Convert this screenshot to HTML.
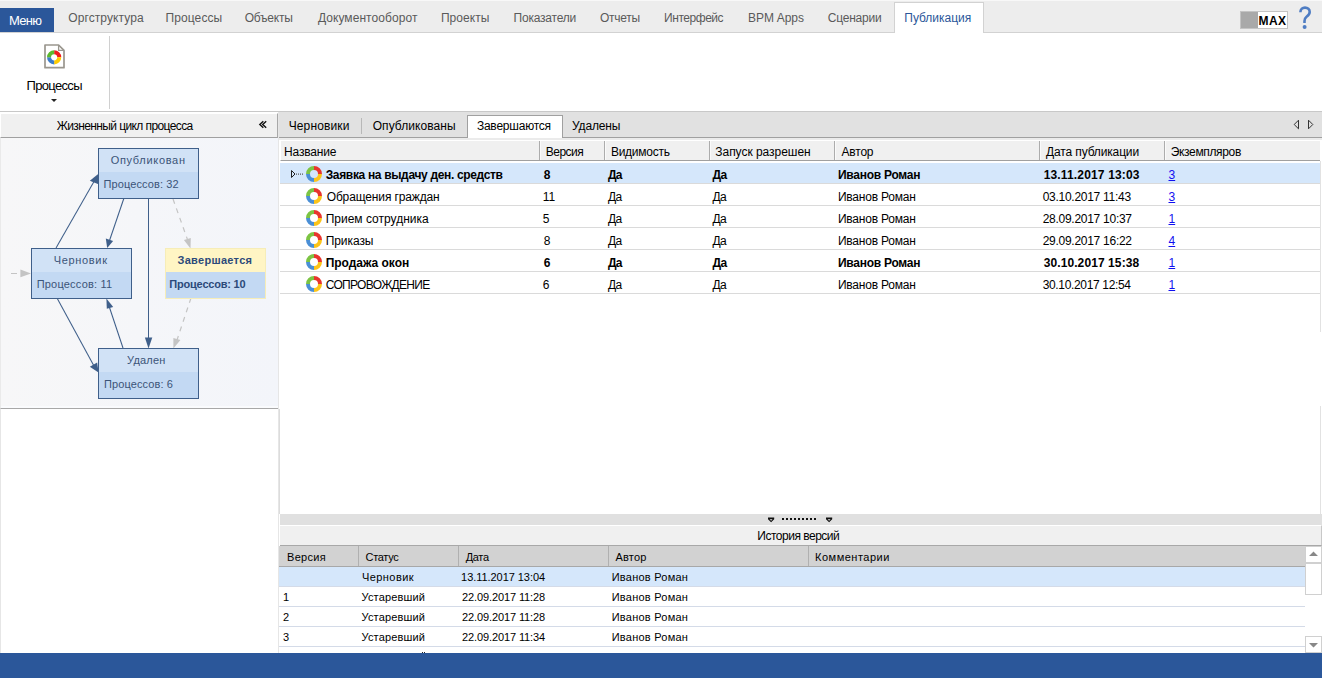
<!DOCTYPE html>
<html><head><meta charset="utf-8">
<style>
*{margin:0;padding:0;box-sizing:border-box}
html,body{width:1322px;height:678px;overflow:hidden;background:#fff;font-family:"Liberation Sans",sans-serif;font-size:12px;color:#000}
.a{position:absolute}
.t{position:absolute;white-space:nowrap;line-height:14px}
.bx{position:absolute;width:101px;height:51px;border:1px solid #3f5f8a;background:#c3d9f3}
.bx .hd{position:absolute;left:0;top:0;width:99px;height:23px;background:#d1e2f6}
</style></head><body>

<div class="a" style="left:0;top:0;width:1322px;height:33px;background:#ededed;border-top:1px solid #f8f8f8;border-bottom:1px solid #d2d2d2"></div>
<div class="a" style="left:0;top:8px;width:54px;height:24px;background:#2b579a"></div>
<div class="a" style="left:894px;top:2px;width:90px;height:31px;background:#fff;border:1px solid #d2d2d2;border-bottom:none"></div>
<div class="a" style="left:1240px;top:11px;width:48px;height:18px;background:#fff;border:1px solid #c4c4c4"></div>
<div class="a" style="left:1241px;top:12px;width:17px;height:16px;background:#a9a9a9"></div>
<svg class="a" style="left:1298px;top:6px" width="16" height="24" viewBox="0 0 16 24"><path d="M2.4 6.2C2.4 3.2 4.6 1.6 7 1.6C9.6 1.6 11.7 3.4 11.7 6C11.7 8.6 9.9 9.8 8.3 11C6.9 12.1 6.5 13 6.5 15V17" fill="none" stroke="#4f7dc3" stroke-width="2.6"/><circle cx="6.6" cy="21" r="2" fill="#4f7dc3"/></svg>
<div class="a" style="left:109px;top:36px;width:1px;height:73px;background:#d0d0d0"></div>
<div class="a" style="left:0;top:111px;width:1322px;height:1px;background:#c8c8c8"></div>
<svg class="a" style="left:40px;top:40px" width="30" height="32" viewBox="0 0 30 32"><path d="M5 5 H18.6 L24 10.4 V27.7 H5 Z" fill="#fff" stroke="#9a968e" stroke-width="1.7" stroke-linejoin="round"/><path d="M18.6 5 V10.4 H24" fill="none" stroke="#9a968e" stroke-width="1.3"/><path d="M14.15 12.20A5.1 5.1 0 0 1 19.25 17.30" stroke="#ee1c1c" stroke-width="3.9999999999999996" fill="none"/><path d="M19.25 17.30A5.1 5.1 0 0 1 14.15 22.40" stroke="#ffcc00" stroke-width="3.9999999999999996" fill="none"/><path d="M14.15 22.40A5.1 5.1 0 0 1 9.05 17.30" stroke="#3d7cc9" stroke-width="3.9999999999999996" fill="none"/><path d="M9.05 17.30A5.1 5.1 0 0 1 14.15 12.20" stroke="#5cb82e" stroke-width="3.9999999999999996" fill="none"/></svg>
<svg class="a" style="left:50.5px;top:99px" width="7" height="4"><path d="M0 0H6L3 3Z" fill="#222"/></svg>
<div class="a" style="left:0;top:113px;width:278px;height:25px;background:#f0f0f0;border-left:1px solid #fff;border-top:1px solid #fff;border-bottom:1px solid #a0a0a0;border-right:1px solid #a8a8a8"></div>
<svg class="a" style="left:257px;top:119px" width="12" height="11"><path d="M6.3 2.2 L2.8 5.5 L6.3 8.8 M9.2 2.2 L5.7 5.5 L9.2 8.8" fill="none" stroke="#111" stroke-width="1.4"/></svg>
<div class="a" style="left:0;top:138px;width:278px;height:271px;background:linear-gradient(90deg,#f7f7f8,#f3f5fa);border-bottom:1px solid #a8a8a8;border-left:1px solid #eaeaea"></div><div class="a" style="left:0;top:409px;width:1px;height:244px;background:#e6e6e6"></div><div class="a" style="left:1px;top:406px;width:277px;height:2px;background:#fafbfd"></div>
<div class="a" style="left:278px;top:112px;width:1px;height:541px;background:#e6e6e6"></div><div class="a" style="left:279px;top:409px;width:1px;height:105px;background:#dcdcdc"></div>
<svg class="a" style="left:0;top:138px" width="278" height="270" viewBox="0 138 278 270">
<g stroke="#3f5f8a" stroke-width="1.05" fill="none">
<line x1="56" y1="248" x2="96" y2="178"/>
<line x1="124" y1="198" x2="109" y2="242"/>
<line x1="148.5" y1="198" x2="148.5" y2="340"/>
<line x1="57" y1="298" x2="94" y2="366"/>
<line x1="123" y1="348" x2="109" y2="306"/>
</g>
<g fill="#3f5f8a">
<path d="M98.5 173.8 L98.5 184.2 L89.8 180.8 Z"/>
<path d="M107.2 248 L105.8 238.4 L113.1 240.9 Z"/>
<path d="M148.5 348.5 L144.9 337.5 L152.3 337.5 Z"/>
<path d="M98.5 372.5 L89.8 366.8 L97.2 362.5 Z"/>
<path d="M106.4 298.5 L106.8 308.8 L113.2 307 Z"/>
</g>
<g stroke="#c4c4c4" stroke-width="1.2" fill="none" stroke-dasharray="5 5">
<line x1="173" y1="199" x2="188" y2="241"/>
<line x1="191" y1="298" x2="177" y2="340"/>
<line x1="11" y1="273.5" x2="17" y2="273.5" stroke-dasharray="none" stroke-width="1"/>
</g>
<g fill="#c4c4c4">
<path d="M190.5 248.5 L183.9 240 L190.8 238 Z"/>
<path d="M173.4 348.6 L173.4 338 L180.4 340 Z"/>
<path d="M31 273.4 L20.4 269.6 L20.4 277.2 Z"/>
</g>
</svg>
<div class="bx" style="left:98px;top:148px"><div class="hd"></div></div>
<div class="bx" style="left:31px;top:248px"><div class="hd"></div></div>
<div class="bx" style="left:98px;top:348px"><div class="hd"></div></div>
<div class="bx" style="left:165px;top:248px;border-color:#f6edb8"><div class="hd" style="background:#fff5c4"></div></div>
<div class="a" style="left:279px;top:112px;width:1043px;height:26px;background:#e1e1e1;border-bottom:1px solid #a0a0a0"></div>
<div class="a" style="left:361px;top:118px;width:1px;height:16px;background:#b8b8b8"></div>
<div class="a" style="left:467px;top:115px;width:96px;height:23px;background:#fff;border:1px solid #a0a0a0;border-bottom:none"></div>
<svg class="a" style="left:1290px;top:118px" width="28" height="12"><path d="M8.5 2.2 L4.2 6.5 L8.5 10.8 Z M18.5 2.2 L22.8 6.5 L18.5 10.8 Z" fill="none" stroke="#333" stroke-width="1"/></svg>
<div class="a" style="left:280px;top:138px;width:1042px;height:376px;background:#fff"></div><div class="a" style="left:279px;top:138px;width:1043px;height:2px;background:#ebebeb"></div>
<div class="a" style="left:280px;top:140px;width:1040px;height:21px;background:#f0f0f0;border-top:1px solid #fff;border-left:1px solid #fff;border-bottom:1px solid #a0a0a0"></div>
<div class="a" style="left:539px;top:141px;width:1px;height:19px;background:#acacac"></div><div class="a" style="left:540px;top:141px;width:1px;height:19px;background:#fafafa"></div>
<div class="a" style="left:604px;top:141px;width:1px;height:19px;background:#acacac"></div><div class="a" style="left:605px;top:141px;width:1px;height:19px;background:#fafafa"></div>
<div class="a" style="left:709px;top:141px;width:1px;height:19px;background:#acacac"></div><div class="a" style="left:710px;top:141px;width:1px;height:19px;background:#fafafa"></div>
<div class="a" style="left:834px;top:141px;width:1px;height:19px;background:#acacac"></div><div class="a" style="left:835px;top:141px;width:1px;height:19px;background:#fafafa"></div>
<div class="a" style="left:1039px;top:141px;width:1px;height:19px;background:#acacac"></div><div class="a" style="left:1040px;top:141px;width:1px;height:19px;background:#fafafa"></div>
<div class="a" style="left:1164px;top:141px;width:1px;height:19px;background:#acacac"></div><div class="a" style="left:1165px;top:141px;width:1px;height:19px;background:#fafafa"></div>
<div class="a" style="left:280px;top:162px;width:1040px;height:22px;background:#fff;border-bottom:1px solid #dadada"></div>
<div class="a" style="left:280px;top:163px;width:1040px;height:20px;background:#d5e7fb"></div>
<svg class="a" style="left:304px;top:164px" width="20" height="20"><path d="M10.00 4.00A6.0 6.0 0 0 1 16.00 10.00" stroke="#e8362e" stroke-width="4" fill="none"/><path d="M16.00 10.00A6.0 6.0 0 0 1 10.00 16.00" stroke="#fcc419" stroke-width="4" fill="none"/><path d="M10.00 16.00A6.0 6.0 0 0 1 4.00 10.00" stroke="#4a8fd6" stroke-width="4" fill="none"/><path d="M4.00 10.00A6.0 6.0 0 0 1 10.00 4.00" stroke="#7cc443" stroke-width="4" fill="none"/></svg>
<div class="a" style="left:280px;top:184px;width:1040px;height:22px;background:#fff;border-bottom:1px solid #dadada"></div>
<svg class="a" style="left:304px;top:186px" width="20" height="20"><path d="M10.00 4.00A6.0 6.0 0 0 1 16.00 10.00" stroke="#e8362e" stroke-width="4" fill="none"/><path d="M16.00 10.00A6.0 6.0 0 0 1 10.00 16.00" stroke="#fcc419" stroke-width="4" fill="none"/><path d="M10.00 16.00A6.0 6.0 0 0 1 4.00 10.00" stroke="#4a8fd6" stroke-width="4" fill="none"/><path d="M4.00 10.00A6.0 6.0 0 0 1 10.00 4.00" stroke="#7cc443" stroke-width="4" fill="none"/></svg>
<div class="a" style="left:280px;top:206px;width:1040px;height:22px;background:#fff;border-bottom:1px solid #dadada"></div>
<svg class="a" style="left:304px;top:208px" width="20" height="20"><path d="M10.00 4.00A6.0 6.0 0 0 1 16.00 10.00" stroke="#e8362e" stroke-width="4" fill="none"/><path d="M16.00 10.00A6.0 6.0 0 0 1 10.00 16.00" stroke="#fcc419" stroke-width="4" fill="none"/><path d="M10.00 16.00A6.0 6.0 0 0 1 4.00 10.00" stroke="#4a8fd6" stroke-width="4" fill="none"/><path d="M4.00 10.00A6.0 6.0 0 0 1 10.00 4.00" stroke="#7cc443" stroke-width="4" fill="none"/></svg>
<div class="a" style="left:280px;top:228px;width:1040px;height:22px;background:#fff;border-bottom:1px solid #dadada"></div>
<svg class="a" style="left:304px;top:230px" width="20" height="20"><path d="M10.00 4.00A6.0 6.0 0 0 1 16.00 10.00" stroke="#e8362e" stroke-width="4" fill="none"/><path d="M16.00 10.00A6.0 6.0 0 0 1 10.00 16.00" stroke="#fcc419" stroke-width="4" fill="none"/><path d="M10.00 16.00A6.0 6.0 0 0 1 4.00 10.00" stroke="#4a8fd6" stroke-width="4" fill="none"/><path d="M4.00 10.00A6.0 6.0 0 0 1 10.00 4.00" stroke="#7cc443" stroke-width="4" fill="none"/></svg>
<div class="a" style="left:280px;top:250px;width:1040px;height:22px;background:#fff;border-bottom:1px solid #dadada"></div>
<svg class="a" style="left:304px;top:252px" width="20" height="20"><path d="M10.00 4.00A6.0 6.0 0 0 1 16.00 10.00" stroke="#e8362e" stroke-width="4" fill="none"/><path d="M16.00 10.00A6.0 6.0 0 0 1 10.00 16.00" stroke="#fcc419" stroke-width="4" fill="none"/><path d="M10.00 16.00A6.0 6.0 0 0 1 4.00 10.00" stroke="#4a8fd6" stroke-width="4" fill="none"/><path d="M4.00 10.00A6.0 6.0 0 0 1 10.00 4.00" stroke="#7cc443" stroke-width="4" fill="none"/></svg>
<div class="a" style="left:280px;top:272px;width:1040px;height:22px;background:#fff;border-bottom:1px solid #dadada"></div>
<svg class="a" style="left:304px;top:274px" width="20" height="20"><path d="M10.00 4.00A6.0 6.0 0 0 1 16.00 10.00" stroke="#e8362e" stroke-width="4" fill="none"/><path d="M16.00 10.00A6.0 6.0 0 0 1 10.00 16.00" stroke="#fcc419" stroke-width="4" fill="none"/><path d="M10.00 16.00A6.0 6.0 0 0 1 4.00 10.00" stroke="#4a8fd6" stroke-width="4" fill="none"/><path d="M4.00 10.00A6.0 6.0 0 0 1 10.00 4.00" stroke="#7cc443" stroke-width="4" fill="none"/></svg>
<svg class="a" style="left:290px;top:169px" width="16" height="10"><path d="M1.5 1.5 L5 5 L1.5 8.5 Z" fill="none" stroke="#222" stroke-width="1"/><g fill="#333"><rect x="6" y="4.6" width="1" height="1"/><rect x="8" y="4.6" width="1" height="1"/><rect x="10" y="4.6" width="1" height="1"/><rect x="12" y="4.6" width="1" height="1"/></g></svg>
<div class="a" style="left:280px;top:514px;width:1042px;height:11px;background:#e0e0e0"></div>
<svg class="a" style="left:0;top:0" width="1322" height="678" viewBox="0 0 1322 678"><g fill="#111"><rect x="782" y="518" width="2" height="2"/><rect x="786" y="518" width="2" height="2"/><rect x="790" y="518" width="2" height="2"/><rect x="794" y="518" width="2" height="2"/><rect x="798" y="518" width="2" height="2"/><rect x="802" y="518" width="2" height="2"/><rect x="806" y="518" width="2" height="2"/><rect x="810" y="518" width="2" height="2"/><rect x="814" y="518" width="2" height="2"/><path d="M768 517.6H774.2V519.2L771.1 522.2L768 519.2Z M826 517.6H832.2V519.2L829.1 522.2L826 519.2Z"/></g><path d="M769.6 519.3H772.6L771.1 520.8Z M827.6 519.3H830.6L829.1 520.8Z" fill="#e0e0e0"/></svg>
<div class="a" style="left:280px;top:525px;width:1042px;height:21px;background:#f0f0f0;border-top:1px solid #fff;border-right:1px solid #c8c8c8;border-bottom:1px solid #a8a8a8"></div>
<div class="a" style="left:279px;top:546px;width:1026px;height:21px;background:#d2d2d2;border-bottom:1px solid #a8a8a8"></div>
<div class="a" style="left:358px;top:546px;width:1px;height:20px;background:#b0b0b0"></div>
<div class="a" style="left:458px;top:546px;width:1px;height:20px;background:#b0b0b0"></div>
<div class="a" style="left:608px;top:546px;width:1px;height:20px;background:#b0b0b0"></div>
<div class="a" style="left:808px;top:546px;width:1px;height:20px;background:#b0b0b0"></div>
<div class="a" style="left:279px;top:567px;width:1026px;height:20px;background:#d5e7fb;border-bottom:1px solid #d4dbe8"></div>
<div class="a" style="left:279px;top:587px;width:1026px;height:20px;background:#fff;border-bottom:1px solid #d4dbe8"></div>
<div class="a" style="left:279px;top:607px;width:1026px;height:20px;background:#fff;border-bottom:1px solid #d4dbe8"></div>
<div class="a" style="left:279px;top:627px;width:1026px;height:20px;background:#fff;border-bottom:1px solid #d4dbe8"></div>
<div class="a" style="left:279px;top:647px;width:1026px;height:20px;background:#fff;border-bottom:1px solid #d4dbe8"></div>
<div class="a" style="left:422px;top:652px;width:1px;height:1px;background:#222"></div><div class="a" style="left:424px;top:652px;width:1px;height:1px;background:#222"></div>
<div class="a" style="left:1305px;top:546px;width:17px;height:107px;background:#fff"></div>
<div class="a" style="left:1305px;top:546px;width:17px;height:17px;background:#fff;border:1px solid #d0d0d0"></div>
<div class="a" style="left:1305px;top:563px;width:17px;height:32px;background:#fff;border:1px solid #d0d0d0"></div>
<div class="a" style="left:1305px;top:636px;width:17px;height:17px;background:#fff;border:1px solid #d0d0d0"></div><div class="a" style="left:1320px;top:161px;width:1px;height:171px;background:#e2e2e2"></div><div class="a" style="left:1320px;top:406px;width:1px;height:108px;background:#e2e2e2"></div>
<svg class="a" style="left:1305px;top:546px" width="17" height="107"><path d="M4 10H13L8.5 5.5Z M4 97H13L8.5 101.5Z" fill="#888"/></svg>
<div class="t" id="t0" style="left:8.90px;top:14px;font-size:13px;font-weight:normal;color:#fff;letter-spacing:-0.667px;">Меню</div>
<div class="t" id="t1" style="left:68.30px;top:11px;font-size:12px;font-weight:normal;color:#5a5a5a;letter-spacing:0.091px;">Оргструктура</div>
<div class="t" id="t2" style="left:165.50px;top:11px;font-size:12px;font-weight:normal;color:#5a5a5a;letter-spacing:0.100px;">Процессы</div>
<div class="t" id="t3" style="left:244.70px;top:11px;font-size:12px;font-weight:normal;color:#5a5a5a;letter-spacing:-0.217px;">Объекты</div>
<div class="t" id="t4" style="left:317.90px;top:11px;font-size:12px;font-weight:normal;color:#5a5a5a;letter-spacing:0.071px;">Документооборот</div>
<div class="t" id="t5" style="left:440.90px;top:11px;font-size:12px;font-weight:normal;color:#5a5a5a;letter-spacing:0.050px;">Проекты</div>
<div class="t" id="t6" style="left:513.50px;top:11px;font-size:12px;font-weight:normal;color:#5a5a5a;letter-spacing:-0.211px;">Показатели</div>
<div class="t" id="t7" style="left:599.90px;top:11px;font-size:12px;font-weight:normal;color:#5a5a5a;letter-spacing:-0.260px;">Отчеты</div>
<div class="t" id="t8" style="left:664.10px;top:11px;font-size:12px;font-weight:normal;color:#5a5a5a;letter-spacing:-0.463px;">Интерфейс</div>
<div class="t" id="t9" style="left:748.10px;top:11px;font-size:12px;font-weight:normal;color:#5a5a5a;letter-spacing:-0.029px;">BPM Apps</div>
<div class="t" id="t10" style="left:827.70px;top:11px;font-size:12px;font-weight:normal;color:#5a5a5a;letter-spacing:-0.200px;">Сценарии</div>
<div class="t" id="t11" style="left:904.30px;top:11px;font-size:12px;font-weight:normal;color:#2b579a;letter-spacing:-0.022px;">Публикация</div>
<div class="t" id="t12" style="left:1258.50px;top:14px;font-size:12px;font-weight:bold;color:#000;letter-spacing:0.400px;">MAX</div>
<div class="t" id="t13" style="left:26.50px;top:79px;font-size:13px;font-weight:normal;color:#000;letter-spacing:-0.671px;">Процессы</div>
<div class="t" id="t14" style="left:56.70px;top:119px;font-size:12px;font-weight:normal;color:#000;letter-spacing:-0.600px;">Жизненный цикл процесса</div>
<div class="t" id="t15" style="left:110.70px;top:153px;font-size:11px;font-weight:normal;color:#3b5478;letter-spacing:0.680px;">Опубликован</div>
<div class="t" id="t16" style="left:103.50px;top:177px;font-size:11px;font-weight:normal;color:#3b5478;letter-spacing:0.108px;">Процессов: 32</div>
<div class="t" id="t17" style="left:53.70px;top:253px;font-size:11px;font-weight:normal;color:#3b5478;letter-spacing:0.671px;">Черновик</div>
<div class="t" id="t18" style="left:36.70px;top:277px;font-size:11px;font-weight:normal;color:#3b5478;letter-spacing:0.200px;">Процессов: 11</div>
<div class="t" id="t19" style="left:127.10px;top:353px;font-size:11px;font-weight:normal;color:#3b5478;letter-spacing:0.200px;">Удален</div>
<div class="t" id="t20" style="left:104.10px;top:377px;font-size:11px;font-weight:normal;color:#3b5478;letter-spacing:0.091px;">Процессов: 6</div>
<div class="t" id="t21" style="left:177.50px;top:253px;font-size:11px;font-weight:bold;color:#2c4a7a;letter-spacing:0.300px;">Завершается</div>
<div class="t" id="t22" style="left:169.30px;top:277px;font-size:11px;font-weight:bold;color:#2c4a7a;letter-spacing:-0.200px;">Процессов: 10</div>
<div class="t" id="t23" style="left:288.70px;top:119px;font-size:12px;font-weight:normal;color:#000;letter-spacing:0.125px;">Черновики</div>
<div class="t" id="t24" style="left:372.70px;top:119px;font-size:12px;font-weight:normal;color:#000;letter-spacing:0.064px;">Опубликованы</div>
<div class="t" id="t25" style="left:476.90px;top:119px;font-size:12px;font-weight:normal;color:#000;letter-spacing:-0.220px;">Завершаются</div>
<div class="t" id="t26" style="left:572.10px;top:119px;font-size:12px;font-weight:normal;color:#000;letter-spacing:-0.167px;">Удалены</div>
<div class="t" id="t27" style="left:284.10px;top:145px;font-size:12px;font-weight:normal;color:#000;letter-spacing:-0.200px;">Название</div>
<div class="t" id="t28" style="left:545.70px;top:145px;font-size:12px;font-weight:normal;color:#000;letter-spacing:-0.480px;">Версия</div>
<div class="t" id="t29" style="left:610.90px;top:145px;font-size:12px;font-weight:normal;color:#000;letter-spacing:-0.250px;">Видимость</div>
<div class="t" id="t30" style="left:715.30px;top:145px;font-size:12px;font-weight:normal;color:#000;letter-spacing:-0.036px;">Запуск разрешен</div>
<div class="t" id="t31" style="left:841.50px;top:145px;font-size:12px;font-weight:normal;color:#000;letter-spacing:-0.200px;">Автор</div>
<div class="t" id="t32" style="left:1046.10px;top:145px;font-size:12px;font-weight:normal;color:#000;letter-spacing:-0.143px;">Дата публикации</div>
<div class="t" id="t33" style="left:1170.70px;top:145px;font-size:12px;font-weight:normal;color:#000;letter-spacing:-0.340px;">Экземпляров</div>
<div class="t" id="t34" style="left:325.70px;top:168px;font-size:12px;font-weight:bold;color:#000;letter-spacing:-0.336px;">Заявка на выдачу ден. средств</div>
<div class="t" id="t35" style="left:543.70px;top:168px;font-size:12px;font-weight:bold;color:#000;letter-spacing:0.000px;">8</div>
<div class="t" id="t36" style="left:607.90px;top:168px;font-size:12px;font-weight:bold;color:#000;letter-spacing:-0.600px;">Да</div>
<div class="t" id="t37" style="left:712.50px;top:168px;font-size:12px;font-weight:bold;color:#000;letter-spacing:-0.600px;">Да</div>
<div class="t" id="t38" style="left:837.90px;top:168px;font-size:12px;font-weight:bold;color:#000;letter-spacing:-0.245px;">Иванов Роман</div>
<div class="t" id="t39" style="left:1043.70px;top:168px;font-size:12px;font-weight:bold;color:#000;letter-spacing:0.160px;">13.11.2017 13:03</div>
<div class="t" id="t40" style="left:1168.50px;top:168px;font-size:12px;font-weight:normal;color:#1010f0;letter-spacing:0.000px;text-decoration:underline;text-underline-offset:1px;">3</div>
<div class="t" id="t41" style="left:326.70px;top:190px;font-size:12px;font-weight:normal;color:#000;letter-spacing:-0.138px;">Обращения граждан</div>
<div class="t" id="t42" style="left:542.70px;top:190px;font-size:12px;font-weight:normal;color:#000;letter-spacing:0.000px;">11</div>
<div class="t" id="t43" style="left:607.90px;top:190px;font-size:12px;font-weight:normal;color:#000;letter-spacing:-0.600px;">Да</div>
<div class="t" id="t44" style="left:712.50px;top:190px;font-size:12px;font-weight:normal;color:#000;letter-spacing:-0.600px;">Да</div>
<div class="t" id="t45" style="left:837.90px;top:190px;font-size:12px;font-weight:normal;color:#000;letter-spacing:-0.209px;">Иванов Роман</div>
<div class="t" id="t46" style="left:1042.70px;top:190px;font-size:12px;font-weight:normal;color:#000;letter-spacing:-0.273px;">03.10.2017 11:43</div>
<div class="t" id="t47" style="left:1168.50px;top:190px;font-size:12px;font-weight:normal;color:#1010f0;letter-spacing:0.000px;text-decoration:underline;text-underline-offset:1px;">3</div>
<div class="t" id="t48" style="left:325.70px;top:212px;font-size:12px;font-weight:normal;color:#000;letter-spacing:0.000px;">Прием сотрудника</div>
<div class="t" id="t49" style="left:542.70px;top:212px;font-size:12px;font-weight:normal;color:#000;letter-spacing:0.000px;">5</div>
<div class="t" id="t50" style="left:607.90px;top:212px;font-size:12px;font-weight:normal;color:#000;letter-spacing:-0.600px;">Да</div>
<div class="t" id="t51" style="left:712.50px;top:212px;font-size:12px;font-weight:normal;color:#000;letter-spacing:-0.600px;">Да</div>
<div class="t" id="t52" style="left:837.90px;top:212px;font-size:12px;font-weight:normal;color:#000;letter-spacing:-0.209px;">Иванов Роман</div>
<div class="t" id="t53" style="left:1042.70px;top:212px;font-size:12px;font-weight:normal;color:#000;letter-spacing:-0.273px;">28.09.2017 10:37</div>
<div class="t" id="t54" style="left:1168.50px;top:212px;font-size:12px;font-weight:normal;color:#1010f0;letter-spacing:0.000px;text-decoration:underline;text-underline-offset:1px;">1</div>
<div class="t" id="t55" style="left:325.70px;top:234px;font-size:12px;font-weight:normal;color:#000;letter-spacing:-0.067px;">Приказы</div>
<div class="t" id="t56" style="left:543.70px;top:234px;font-size:12px;font-weight:normal;color:#000;letter-spacing:0.000px;">8</div>
<div class="t" id="t57" style="left:607.90px;top:234px;font-size:12px;font-weight:normal;color:#000;letter-spacing:-0.600px;">Да</div>
<div class="t" id="t58" style="left:712.50px;top:234px;font-size:12px;font-weight:normal;color:#000;letter-spacing:-0.600px;">Да</div>
<div class="t" id="t59" style="left:837.90px;top:234px;font-size:12px;font-weight:normal;color:#000;letter-spacing:-0.209px;">Иванов Роман</div>
<div class="t" id="t60" style="left:1042.70px;top:234px;font-size:12px;font-weight:normal;color:#000;letter-spacing:-0.273px;">29.09.2017 16:22</div>
<div class="t" id="t61" style="left:1168.50px;top:234px;font-size:12px;font-weight:normal;color:#1010f0;letter-spacing:0.000px;text-decoration:underline;text-underline-offset:1px;">4</div>
<div class="t" id="t62" style="left:325.70px;top:256px;font-size:12px;font-weight:bold;color:#000;letter-spacing:-0.027px;">Продажа окон</div>
<div class="t" id="t63" style="left:543.70px;top:256px;font-size:12px;font-weight:bold;color:#000;letter-spacing:0.000px;">6</div>
<div class="t" id="t64" style="left:607.90px;top:256px;font-size:12px;font-weight:bold;color:#000;letter-spacing:-0.600px;">Да</div>
<div class="t" id="t65" style="left:712.50px;top:256px;font-size:12px;font-weight:bold;color:#000;letter-spacing:-0.600px;">Да</div>
<div class="t" id="t66" style="left:837.90px;top:256px;font-size:12px;font-weight:bold;color:#000;letter-spacing:-0.245px;">Иванов Роман</div>
<div class="t" id="t67" style="left:1043.70px;top:256px;font-size:12px;font-weight:bold;color:#000;letter-spacing:0.093px;">30.10.2017 15:38</div>
<div class="t" id="t68" style="left:1168.50px;top:256px;font-size:12px;font-weight:normal;color:#1010f0;letter-spacing:0.000px;text-decoration:underline;text-underline-offset:1px;">1</div>
<div class="t" id="t69" style="left:325.70px;top:278px;font-size:12px;font-weight:normal;color:#000;letter-spacing:-0.667px;">СОПРОВОЖДЕНИЕ</div>
<div class="t" id="t70" style="left:542.70px;top:278px;font-size:12px;font-weight:normal;color:#000;letter-spacing:0.000px;">6</div>
<div class="t" id="t71" style="left:607.90px;top:278px;font-size:12px;font-weight:normal;color:#000;letter-spacing:-0.600px;">Да</div>
<div class="t" id="t72" style="left:712.50px;top:278px;font-size:12px;font-weight:normal;color:#000;letter-spacing:-0.600px;">Да</div>
<div class="t" id="t73" style="left:837.90px;top:278px;font-size:12px;font-weight:normal;color:#000;letter-spacing:-0.209px;">Иванов Роман</div>
<div class="t" id="t74" style="left:1042.70px;top:278px;font-size:12px;font-weight:normal;color:#000;letter-spacing:-0.340px;">30.10.2017 12:54</div>
<div class="t" id="t75" style="left:1168.50px;top:278px;font-size:12px;font-weight:normal;color:#1010f0;letter-spacing:0.000px;text-decoration:underline;text-underline-offset:1px;">1</div>
<div class="t" id="t76" style="left:757.30px;top:529px;font-size:12px;font-weight:normal;color:#000;letter-spacing:-0.492px;">История версий</div>
<div class="t" id="t77" style="left:287.10px;top:550px;font-size:11px;font-weight:normal;color:#000;letter-spacing:0.280px;">Версия</div>
<div class="t" id="t78" style="left:365.50px;top:550px;font-size:11px;font-weight:normal;color:#000;letter-spacing:-0.300px;">Статус</div>
<div class="t" id="t79" style="left:465.70px;top:550px;font-size:11px;font-weight:normal;color:#000;letter-spacing:-0.333px;">Дата</div>
<div class="t" id="t80" style="left:615.50px;top:550px;font-size:11px;font-weight:normal;color:#000;letter-spacing:0.175px;">Автор</div>
<div class="t" id="t81" style="left:815.10px;top:550px;font-size:11px;font-weight:normal;color:#000;letter-spacing:0.500px;">Комментарии</div>
<div class="t" id="t82" style="left:361.90px;top:570px;font-size:11px;font-weight:normal;color:#000;letter-spacing:0.457px;">Черновик</div>
<div class="t" id="t83" style="left:461.10px;top:570px;font-size:11px;font-weight:normal;color:#000;letter-spacing:-0.053px;">13.11.2017 13:04</div>
<div class="t" id="t84" style="left:611.70px;top:570px;font-size:11px;font-weight:normal;color:#000;letter-spacing:0.245px;">Иванов Роман</div>
<div class="t" id="t85" style="left:282.90px;top:590px;font-size:11px;font-weight:normal;color:#000;letter-spacing:0.000px;">1</div>
<div class="t" id="t86" style="left:361.50px;top:590px;font-size:11px;font-weight:normal;color:#000;letter-spacing:0.167px;">Устаревший</div>
<div class="t" id="t87" style="left:462.10px;top:590px;font-size:11px;font-weight:normal;color:#000;letter-spacing:-0.120px;">22.09.2017 11:28</div>
<div class="t" id="t88" style="left:611.70px;top:590px;font-size:11px;font-weight:normal;color:#000;letter-spacing:0.245px;">Иванов Роман</div>
<div class="t" id="t89" style="left:282.90px;top:610px;font-size:11px;font-weight:normal;color:#000;letter-spacing:0.000px;">2</div>
<div class="t" id="t90" style="left:361.50px;top:610px;font-size:11px;font-weight:normal;color:#000;letter-spacing:0.167px;">Устаревший</div>
<div class="t" id="t91" style="left:462.10px;top:610px;font-size:11px;font-weight:normal;color:#000;letter-spacing:-0.120px;">22.09.2017 11:28</div>
<div class="t" id="t92" style="left:611.70px;top:610px;font-size:11px;font-weight:normal;color:#000;letter-spacing:0.245px;">Иванов Роман</div>
<div class="t" id="t93" style="left:282.90px;top:630px;font-size:11px;font-weight:normal;color:#000;letter-spacing:0.000px;">3</div>
<div class="t" id="t94" style="left:361.50px;top:630px;font-size:11px;font-weight:normal;color:#000;letter-spacing:0.167px;">Устаревший</div>
<div class="t" id="t95" style="left:462.10px;top:630px;font-size:11px;font-weight:normal;color:#000;letter-spacing:-0.120px;">22.09.2017 11:34</div>
<div class="t" id="t96" style="left:611.70px;top:630px;font-size:11px;font-weight:normal;color:#000;letter-spacing:0.245px;">Иванов Роман</div>
<div class="t" id="t97" style="left:283.70px;top:650px;font-size:11px;font-weight:normal;color:#000;letter-spacing:0.000px;">4</div>
<div class="t" id="t98" style="left:362.00px;top:650px;font-size:11px;font-weight:normal;color:#000;letter-spacing:0.000px;">Устаревший</div>
<div class="a" style="left:0;top:653px;width:1322px;height:25px;background:#2b579a"></div>
</body></html>
